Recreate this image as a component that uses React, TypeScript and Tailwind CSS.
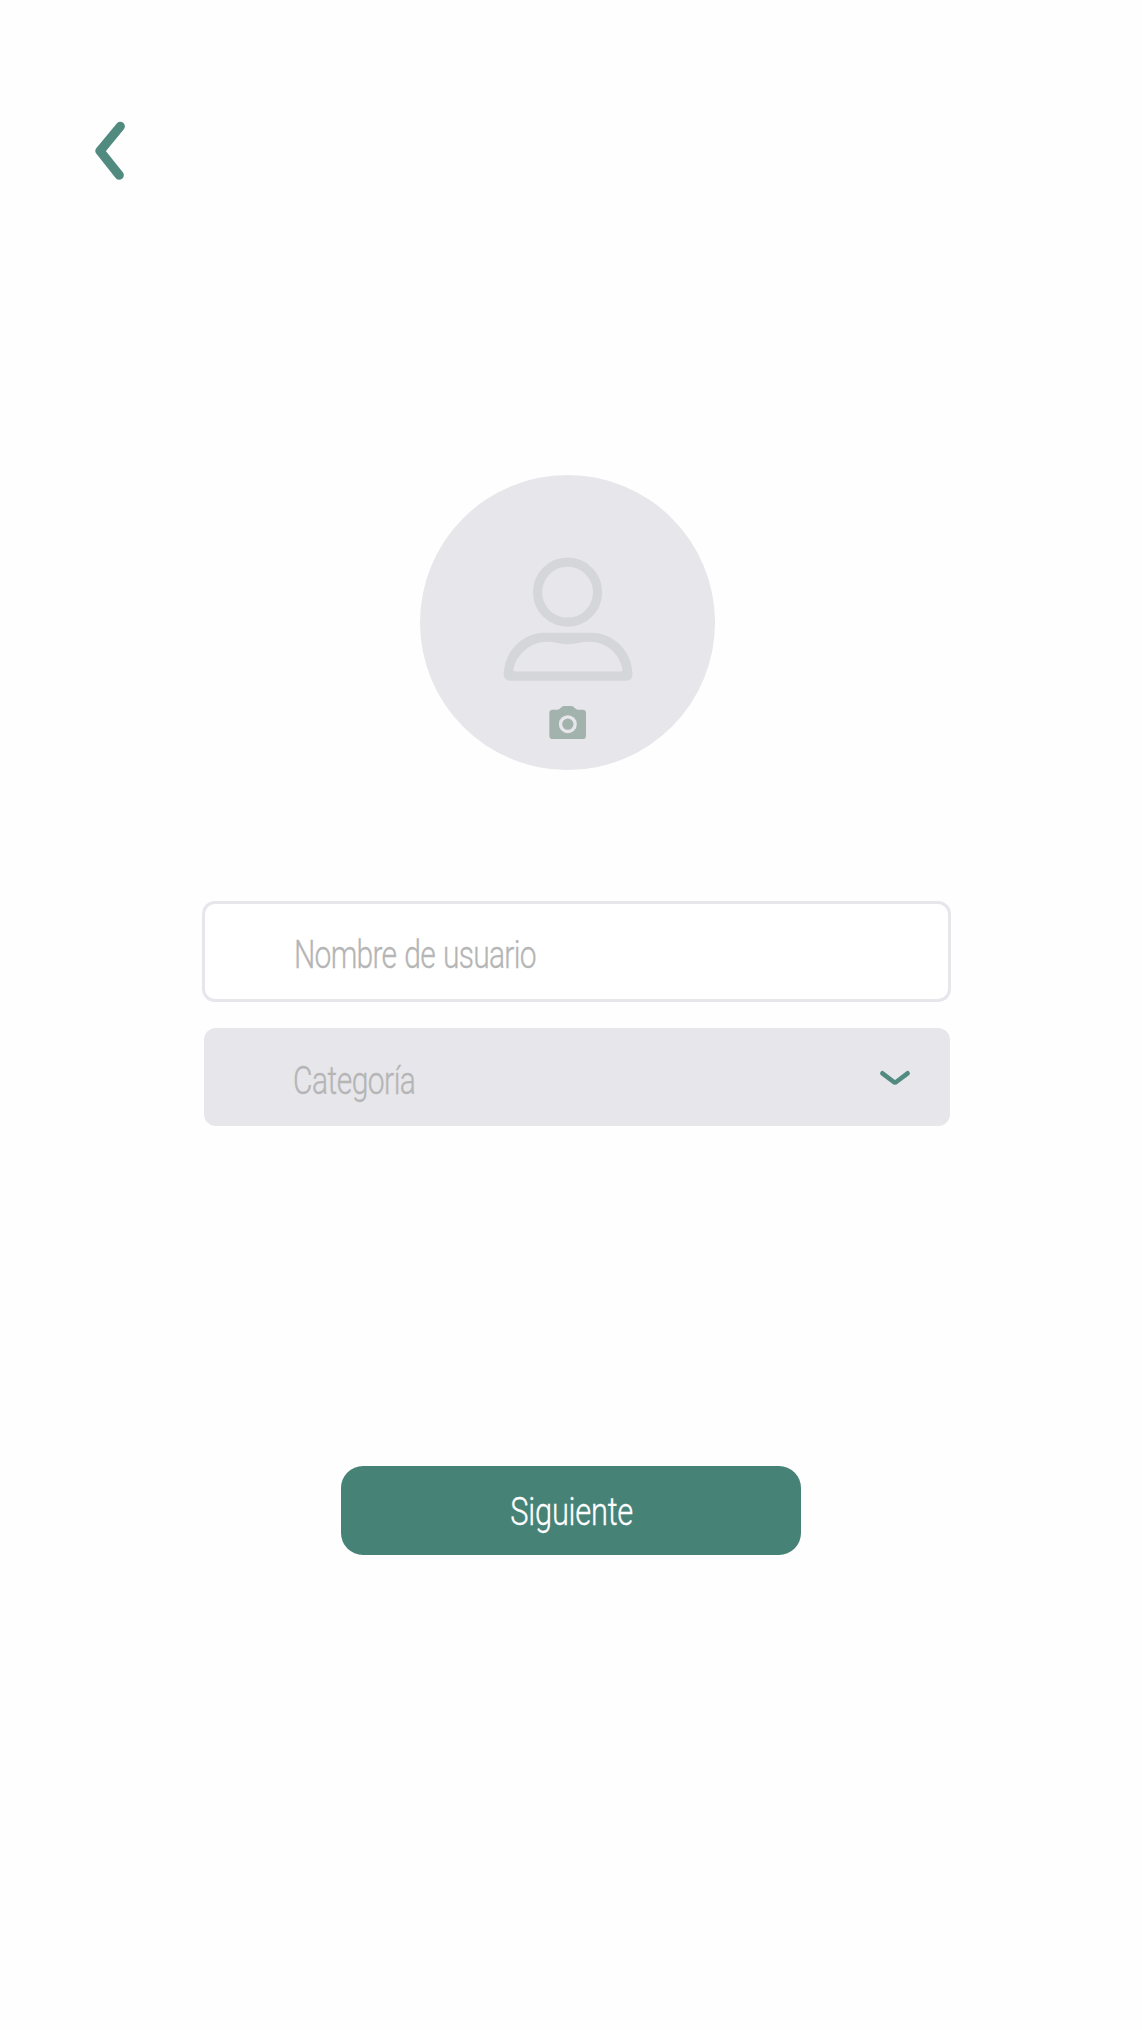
import React from "react";

function BackIcon() {
  return (
    <svg className="h-[64px] w-[34px]" viewBox="0 0 34 64" fill="none">
      <path d="M28.3 7.3 8 32l19.2 24.2" stroke="#518b80" strokeWidth="9.200" strokeLinecap="round" strokeLinejoin="round" />
    </svg>
  );
}

function PersonIcon() {
  return (
    <svg className="h-[124px] w-[130px]" viewBox="0 0 390 372" fill="none">
      <circle cx="193.7" cy="105.5" r="90" stroke="#d5d6da" strokeWidth="27.5" />
      <path
        fill="#d5d6da"
        fillRule="evenodd"
        d="M126 227H264C333 227 388 284 388.500 352Q388.500 371 371 371H22Q2 370 2 351C5 283 58 227 126 227ZM131 254.500C87 254.500 43 287 31 336Q30 343.500 39 343.500H351Q360 343.500 358.500 336C348 289 311 254.500 259 254.500C231 254.500 221 261.500 194 261.500C167 261.500 157 254.500 131 254.500Z"
      />
    </svg>
  );
}

function CameraIcon() {
  return (
    <svg className="h-[34px] w-[37px]" viewBox="0 0 111 102" fill="none">
      <path
        fill="#a2b3ad"
        d="M11 11H24Q29 11 32 8L38 3Q41 0 46 0H66Q71 0 74 3L80 8Q83 11 88 11H101Q111 11 111 21V89Q111 99 101 99H11Q1 99 1 89V21Q1 11 11 11Z"
      />
      <circle cx="56.500" cy="54.500" r="22" stroke="#e6e6eb" strokeWidth="10" />
    </svg>
  );
}

function ChevronDown() {
  return (
    <svg className="mt-[3px] h-[16px] w-[32px]" viewBox="0 0 32 16" fill="none">
      <path d="M3.400 3.300 14.500 11.700Q16 12.900 17.500 11.700L28.600 3.300" stroke="#518b80" strokeWidth="4.600" strokeLinecap="round" />
    </svg>
  );
}

export default function App() {
  return (
    <main className="flex h-[2030px] w-[1142px] flex-col bg-[#fefefe] font-['Roboto','Liberation_Sans',sans-serif] text-[39.5px] leading-[48px] font-light [-webkit-text-stroke-width:0.35px]">
      <header className="pt-[119px] pl-[92px]">
        <button className="block" aria-label="Volver">
          <BackIcon />
        </button>
      </header>

      <button
        aria-label="Foto de perfil"
        className="mt-[291.700px] ml-[420.300px] flex h-[295px] w-[294.700px] flex-col items-center rounded-full bg-[#e6e6eb] pt-[82.500px]"
      >
        <PersonIcon />
        <span className="mt-[24.500px]">
          <CameraIcon />
        </span>
      </button>

      <form className="mt-[131px] ml-[202.300px] flex w-[749px] flex-col">
        <div className="flex h-[101px] items-center rounded-[13px] border-[3px] border-[#e6e6eb] bg-white pt-[7px] pl-[89px] text-[#b5b5b5]">
          <span className="origin-left scale-x-[0.76] tracking-[-1px] whitespace-nowrap [word-spacing:2px]">Nombre de usuario</span>
        </div>
        <div className="mt-[26px] mr-[1.300px] ml-[1.700px] flex h-[98px] items-center justify-between rounded-[12px] bg-[#e6e6eb] pr-[39px] pl-[89.5px] text-[#b5b5b5]">
          <span className="origin-left scale-x-[0.76] pt-[8px] tracking-[-0.7px] whitespace-nowrap">Categoría</span>
          <ChevronDown />
        </div>
      </form>

      <button className="mt-[340px] ml-[341.300px] flex h-[89px] w-[460.100px] items-center justify-center rounded-[22px] bg-[#478277] pt-[3px] pl-[1px] text-white">
        <span className="scale-x-[0.78] tracking-[-0.3px]">Siguiente</span>
      </button>
    </main>
  );
}
